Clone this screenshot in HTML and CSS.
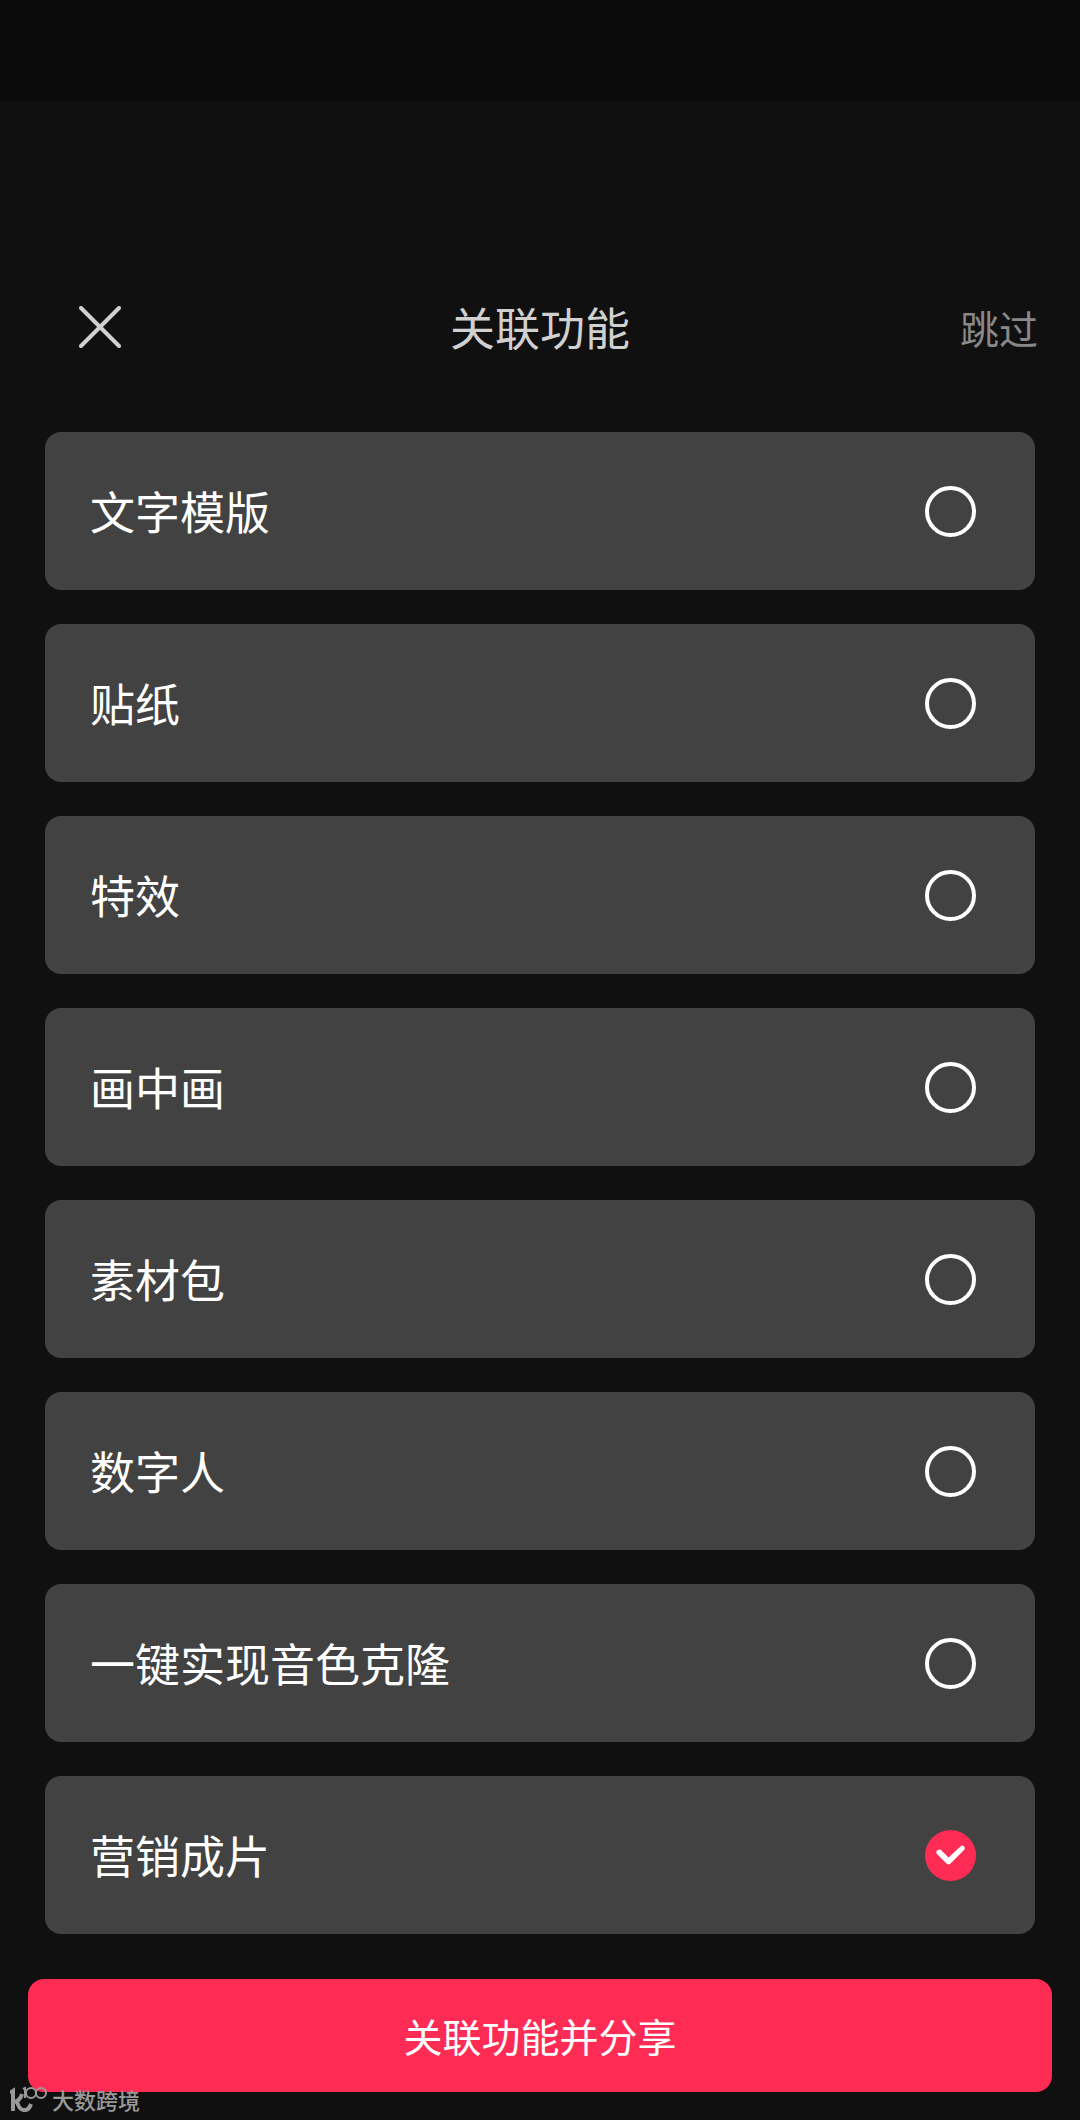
FILE: index.html
```html
<!DOCTYPE html>
<html lang="zh-CN">
<head>
  <meta charset="UTF-8" />
  <meta name="viewport" content="width=device-width, initial-scale=1.0" />
  <title>关联功能</title>
  <link rel="stylesheet" href="styles.css">
</head>
<body>
  <div class="status-bar"></div>

  <header class="header">
    <button class="close-btn" type="button" aria-label="关闭">
      <svg viewBox="0 0 42 42" width="42" height="42">
        <path d="M2 2L40 40M40 2L2 40" />
      </svg>
    </button>
    <h1 class="title">关联功能</h1>
    <button class="skip-btn" type="button">跳过</button>
  </header>

  <form class="form">
    <div class="options">
      <label class="option">
        <span>文字模版</span>
        <input class="radio" type="radio" name="feature" value="text" />
      </label>
      <label class="option">
        <span>贴纸</span>
        <input class="radio" type="radio" name="feature" value="sticker" />
      </label>
      <label class="option">
        <span>特效</span>
        <input class="radio" type="radio" name="feature" value="effect" />
      </label>
      <label class="option">
        <span>画中画</span>
        <input class="radio" type="radio" name="feature" value="pip" />
      </label>
      <label class="option">
        <span>素材包</span>
        <input class="radio" type="radio" name="feature" value="pack" />
      </label>
      <label class="option">
        <span>数字人</span>
        <input class="radio" type="radio" name="feature" value="avatar" />
      </label>
      <label class="option">
        <span>一键实现音色克隆</span>
        <input class="radio" type="radio" name="feature" value="voice" />
      </label>
      <label class="option">
        <span>营销成片</span>
        <input class="radio" type="radio" name="feature" value="marketing" checked />
      </label>
    </div>
    <button class="share-btn" type="button">关联功能并分享</button>
  </form>

  <div class="watermark">
    <svg viewBox="0 0 38 26" width="38" height="26">
      <path class="thick" d="M0 7L3 5V25M12 8C11 12 8 15 4 16M7 15C9 26 18 27 21 18" />
      <path class="thin" d="M13 3L15 2V12" />
      <circle class="thin" cx="21" cy="7" r="5" />
      <circle class="thin" cx="31" cy="7" r="5" />
    </svg>
    <span>大数跨境</span>
  </div>
</body>
</html>
```
FILE: styles.css
```css
* {
  box-sizing: border-box;
  margin: 0;
  padding: 0;
}
body {
  position: relative;
  min-height: 100vh;
  background-color: #101010;
  color: #fff;
  font-family: 'Noto Sans CJK SC', sans-serif;
  font-size: 45px;
  line-height: 64px;
}
button {
  background: none;
  border: none;
  color: inherit;
  font: inherit;
  cursor: pointer;
}
.status-bar {
  height: 101px;
  background-color: #0b0b0b;
}
.header {
  display: grid;
  grid-template-columns: 1fr auto 1fr;
  align-items: center;
  padding: 194px 42px 73px;
}
.close-btn {
  justify-self: start;
  display: flex;
  padding-left: 37px;
}
.close-btn svg {
  fill: none;
  stroke: #d0d0d0;
  stroke-width: 4;
  stroke-linecap: round;
}
.title {
  color: #d0d0d0;
  font-size: 45px;
  font-weight: 400;
}
.skip-btn {
  justify-self: end;
  color: #888;
  font-size: 39px;
}
.options {
  display: flex;
  flex-direction: column;
  gap: 34px;
  padding: 0 45px;
}
.option {
  display: flex;
  align-items: center;
  justify-content: space-between;
  padding: 47px 59px 47px 45px;
  border-radius: 16px;
  background-color: #424242;
  cursor: pointer;
}
.radio {
  display: grid;
  place-items: center;
  width: 51px;
  height: 51px;
  appearance: none;
  border: 4px solid #fff;
  border-radius: 50%;
}
.radio:checked {
  border: none;
  background-color: #fe2c55;
}
/* white tick inside the selected circle */
.radio:checked::before {
  content: '';
  width: 30px;
  height: 21px;
  background-color: #fff;
  clip-path: path('M5 5L13 13L26 1Q30 1 29 5L15 19Q13 21 11 19L1 9Q0 5 5 5Z');
}
.form {
  padding-bottom: 28px;
}
.share-btn {
  display: block;
  width: calc(100% - 56px);
  margin: 45px 28px 0;
  padding: 24px;
  border-radius: 16px;
  background-color: #fe2c55;
  font-size: 39px;
  line-height: 65px;
}
.watermark {
  position: absolute;
  left: 10px;
  bottom: 8px;
  display: flex;
  align-items: center;
  gap: 4px;
  color: #999;
  font-size: 22px;
  font-weight: 500;
  line-height: 26px;
}
.watermark svg {
  fill: none;
  stroke: #999;
}
.thick {
  stroke-width: 4;
}
.thin {
  stroke-width: 2;
}
```
